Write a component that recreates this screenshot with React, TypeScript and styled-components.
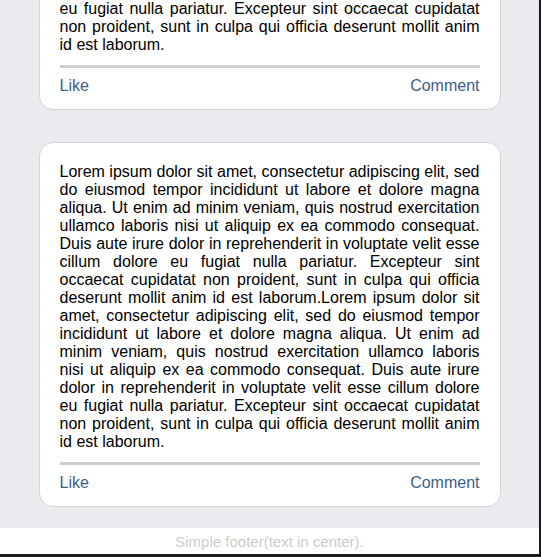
import React, { useLayoutEffect, useRef } from "react";
import styled, { createGlobalStyle } from "styled-components";

const GlobalStyle = createGlobalStyle`
  html, body {
    margin: 0;
    padding: 0;
    background: #1c1c1c;
  }
  body {
    font-family: "Liberation Sans", Arial, sans-serif;
  }
  * { box-sizing: border-box; }
`;

const Page = styled.div`
  display: flex;
  flex-direction: column;
  height: 100vh;
  border-right: 2px solid #1c1c1c;
  border-bottom: 3px solid #1c1c1c;
  overflow: hidden;
`;

const Feed = styled.main`
  position: relative;
  flex: 1;
  min-height: 0;
  overflow: hidden;
  background: #e9ebee;
`;

const FeedColumn = styled.div`
  display: flex;
  flex-direction: column;
  gap: 32px;
  padding: 32px 0 40px;
`;

const Card = styled.article`
  width: 462px;
  margin: 0 auto;
  background: #ffffff;
  border: 1px solid #d4d4d4;
  border-radius: 14px;
  padding: 20px 20px 14px;
`;

const PostText = styled.p`
  margin: 0;
  font-size: 16px;
  line-height: 18px;
  color: #000000;
  text-align: justify;
`;

const Divider = styled.div`
  height: 3px;
  margin-top: 11px;
  background: #cfcfcf;
`;

const Actions = styled.div`
  display: flex;
  justify-content: space-between;
  margin-top: 9px;
  font-size: 16px;
  line-height: 18px;
`;

const ActionLink = styled.span`
  color: #3d5d8a;
  cursor: pointer;
`;

const Footer = styled.footer`
  height: 26px;
  flex: 0 0 auto;
  display: flex;
  align-items: center;
  justify-content: center;
  background: #ffffff;
  color: #cccccc;
  font-size: 15px;
`;

const LOREM =
  "Lorem ipsum dolor sit amet, consectetur adipiscing elit, sed do eiusmod tempor incididunt ut labore et dolore magna aliqua. Ut enim ad minim veniam, quis nostrud exercitation ullamco laboris nisi ut aliquip ex ea commodo consequat. Duis aute irure dolor in reprehenderit in voluptate velit esse cillum dolore eu fugiat nulla pariatur. Excepteur sint occaecat cupidatat non proident, sunt in culpa qui officia deserunt mollit anim id est laborum.";

const posts = [LOREM + LOREM, LOREM + LOREM];

export default function App() {
  const feedRef = useRef<HTMLElement | null>(null);
  const secondRef = useRef<HTMLElement | null>(null);

  useLayoutEffect(() => {
    if (feedRef.current && secondRef.current) {
      feedRef.current.scrollTop = secondRef.current.offsetTop - 142;
    }
  }, []);

  return (
    <>
      <GlobalStyle />
      <Page>
        <Feed ref={feedRef}>
          <FeedColumn>
            {posts.map((text, i) => (
              <Card key={i} ref={i === 1 ? secondRef : undefined}>
                <PostText>{text}</PostText>
                <Divider />
                <Actions>
                  <ActionLink>Like</ActionLink>
                  <ActionLink>Comment</ActionLink>
                </Actions>
              </Card>
            ))}
          </FeedColumn>
        </Feed>
        <Footer>Simple footer(text in center).</Footer>
      </Page>
    </>
  );
}
